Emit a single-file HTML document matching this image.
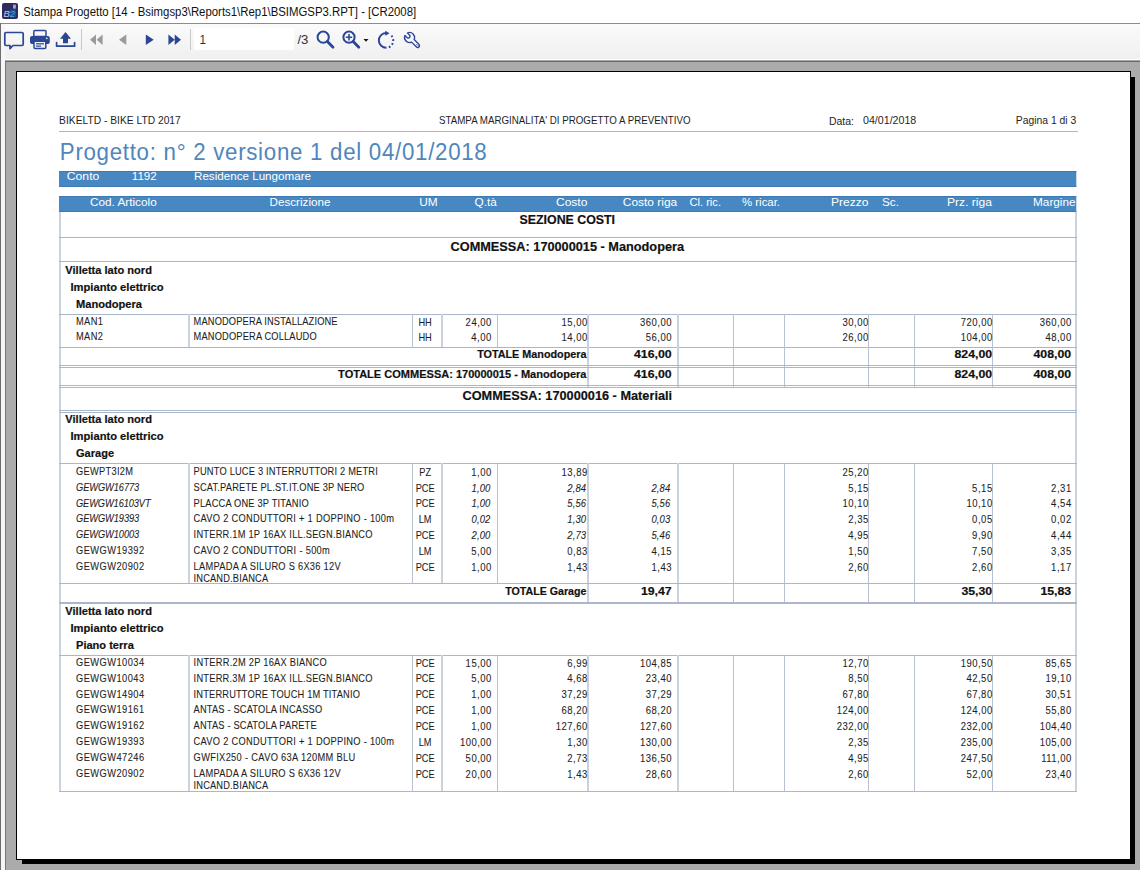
<!DOCTYPE html><html><head><meta charset="utf-8"><style>html,body{margin:0;padding:0;width:1140px;height:870px;overflow:hidden;background:#fff}</style></head><body><svg width="1140" height="870" viewBox="0 0 1140 870" style="position:absolute;left:0;top:0;font-family:'Liberation Sans',sans-serif">
<rect x="0" y="0" width="1140" height="23" fill="#ffffff"/>
<rect x="2" y="3" width="16" height="16" rx="2" fill="#2c2c5e"/>
<rect x="10" y="9.6" width="6" height="7.6" fill="#1f4f8e"/>
<text x="3.4" y="16.8" font-size="9.6" font-style="italic" fill="#c6c8e6">B</text>
<text x="9.9" y="16.6" font-size="9" font-style="italic" fill="#45aee8">2</text>
<rect x="13" y="4.4" width="2.9" height="4.4" rx="0.8" fill="#a2a4c6"/>
<text x="23.20" y="16.00" font-size="12" fill="#111" textLength="393.00" lengthAdjust="spacingAndGlyphs">Stampa Progetto [14 - Bsimgsp3\Reports1\Rep1\BSIMGSP3.RPT] - [CR2008]</text>
<defs><linearGradient id="tb" x1="0" y1="0" x2="0" y2="1"><stop offset="0" stop-color="#fbfbfb"/><stop offset="1" stop-color="#efefef"/></linearGradient></defs>
<rect x="0" y="23" width="1140" height="1" fill="#8c8c8c"/>
<rect x="0" y="24" width="1140" height="36" fill="url(#tb)"/>
<rect x="5" y="59" width="1135" height="1" fill="#ffffff"/>
<rect x="5" y="60" width="1135" height="1" fill="#a8a8a8"/>
<rect x="5" y="61" width="1135" height="1" fill="#6a6a6a"/>
<rect x="0" y="23" width="1" height="847" fill="#6d6d6d"/>
<rect x="1" y="24" width="4" height="846" fill="#f6f6f6"/>
<rect x="5" y="62" width="1135" height="808" fill="#ababab"/>
<rect x="5" y="62" width="1" height="808" fill="#787878"/>
<rect x="22" y="77" width="1113" height="787" fill="#000000"/>
<rect x="16" y="71" width="1115" height="789" fill="#000000"/>
<rect x="17" y="72" width="1113" height="787" fill="#ffffff"/>
<path d="M6 32.5 H22 Q23.2 32.5 23.2 33.7 V44.3 Q23.2 45.5 22 45.5 H13 L10 48.6 V45.5 H6 Q4.8 45.5 4.8 44.3 V33.7 Q4.8 32.5 6 32.5 Z" fill="none" stroke="#2b4694" stroke-width="1.7" stroke-linejoin="round"/>
<rect x="33.8" y="30.6" width="12.2" height="6" rx="1" fill="none" stroke="#2b4694" stroke-width="1.5"/>
<rect x="30" y="36" width="19.8" height="8" rx="2" fill="#2b4694"/>
<circle cx="46.8" cy="38.4" r="0.8" fill="#ffffff"/>
<rect x="34" y="41.2" width="11.8" height="7.4" rx="1" fill="#eef0f6" stroke="#2b4694" stroke-width="1.5"/>
<rect x="36" y="43.2" width="8" height="1.2" fill="#2b4694"/>
<rect x="36" y="45.5" width="5" height="1.2" fill="#2b4694"/>
<path d="M65.5 32 L71 38.8 H68 V43.2 H63 V38.8 H60 Z" fill="#2b4694"/>
<path d="M56.6 42.5 V46.2 H74.6 V42.5" fill="none" stroke="#2b4694" stroke-width="1.7" stroke-linecap="round" stroke-linejoin="round"/>
<rect x="81" y="29" width="1" height="21" fill="#c9c9c9"/>
<rect x="190" y="29" width="1" height="21" fill="#c9c9c9"/>
<path d="M96 34.5 L90 39.8 L96 45 Z M102.6 34.5 L96.6 39.8 L102.6 45 Z" fill="#9a9a9a"/>
<path d="M126.3 34.5 L119 39.8 L126.3 45 Z" fill="#9a9a9a"/>
<path d="M145.8 34.5 L153.7 39.8 L145.8 45 Z" fill="#2b4694"/>
<path d="M168.4 34.5 L174.7 39.8 L168.4 45 Z M174.7 34.5 L181 39.8 L174.7 45 Z" fill="#2b4694"/>
<rect x="194" y="28" width="100" height="22" fill="#ffffff"/>
<text x="199.40" y="43.50" font-size="12" fill="#3a2a3a" textLength="6.50" lengthAdjust="spacingAndGlyphs">1</text>
<text x="297.40" y="44.40" font-size="12" fill="#333" textLength="11.00" lengthAdjust="spacingAndGlyphs">/3</text>
<circle cx="323.2" cy="37.2" r="5.6" fill="none" stroke="#2b4694" stroke-width="2"/>
<path d="M327.4 41.6 L333 47.2" stroke="#2b4694" stroke-width="2.8" stroke-linecap="round"/>
<circle cx="349" cy="37.2" r="5.6" fill="none" stroke="#2b4694" stroke-width="2"/>
<path d="M349 34 V40.4 M345.8 37.2 H352.2" stroke="#2b4694" stroke-width="1.6"/>
<path d="M353.2 41.6 L358.8 47.2" stroke="#2b4694" stroke-width="2.8" stroke-linecap="round"/>
<path d="M363.5 39 H368.5 L366 41.8 Z" fill="#111"/>
<path d="M386 33 A7.4 7.4 0 0 0 386.5 47.8" fill="none" stroke="#2b4694" stroke-width="1.9"/>
<path d="M391.4 35.6 A7.4 7.4 0 0 1 388.6 47.4" fill="none" stroke="#2b4694" stroke-width="2" stroke-dasharray="1.8 2.2"/>
<path d="M385.2 30.8 L389.6 33.2 L385.4 35.8 Z" fill="#2b4694"/>
<path transform="translate(409.6,37.6) rotate(-45)" d="M-1.7 -4.8 A5 5 0 0 0 -1.8 4.6 L-1.8 11.6 Q-1.8 13.2 0 13.2 Q1.8 13.2 1.8 11.6 L1.8 4.6 A5 5 0 0 0 1.7 -4.8 L1.7 -1.6 Q1.7 -0.2 0 -0.2 Q-1.7 -0.2 -1.7 -1.6 Z" fill="none" stroke="#2b4694" stroke-width="1.35" stroke-linejoin="round"/>
<path transform="translate(409.6,37.6) rotate(-45)" d="M-0.9 10 H0.9 M-0.9 11.6 H0.9" stroke="#2b4694" stroke-width="0.7"/>
<text x="59.10" y="124.30" font-size="10.3" fill="#1e1e1e" textLength="121.70" lengthAdjust="spacingAndGlyphs">BIKELTD - BIKE LTD 2017</text>
<text x="439.00" y="124.30" font-size="10.3" fill="#1e1e1e" textLength="251.50" lengthAdjust="spacingAndGlyphs">STAMPA MARGINALITA&#x27; DI PROGETTO A PREVENTIVO</text>
<text x="829.00" y="125.00" font-size="10.3" fill="#1e1e1e" textLength="25.00" lengthAdjust="spacingAndGlyphs">Data:</text>
<text x="863.00" y="124.30" font-size="10.3" fill="#1e1e1e" textLength="53.30" lengthAdjust="spacingAndGlyphs">04/01/2018</text>
<text x="1076.30" y="124.30" font-size="10.3" text-anchor="end" fill="#1e1e1e" textLength="60.50" lengthAdjust="spacingAndGlyphs">Pagina 1 di 3</text>
<rect x="59" y="131" width="1019" height="1" fill="#a7b9d2"/>
<text transform="scale(0.93,1)" x="64.30" y="159.80" font-size="24" fill="#4f86bd" textLength="459.14" lengthAdjust="spacing">Progetto: n° 2 versione 1 del 04/01/2018</text>
<rect x="59" y="171" width="1017.3" height="16" fill="#4788c2"/>
<rect x="59" y="171" width="1017.3" height="1" fill="#3e7ab3"/>
<rect x="59" y="186" width="1017.3" height="1" fill="#3e7ab3"/>
<text x="66.80" y="180.40" font-size="11.6" fill="#ffffff" textLength="32.50" lengthAdjust="spacingAndGlyphs">Conto</text>
<text x="131.80" y="180.40" font-size="11.6" fill="#ffffff" textLength="24.95" lengthAdjust="spacingAndGlyphs">1192</text>
<text x="194.00" y="180.40" font-size="11.6" fill="#ffffff" textLength="117.00" lengthAdjust="spacingAndGlyphs">Residence Lungomare</text>
<rect x="59" y="196" width="1017.3" height="16" fill="#4788c2"/>
<rect x="59" y="196" width="1017.3" height="1" fill="#3e7ab3"/>
<rect x="59" y="211" width="1017.3" height="1" fill="#3e7ab3"/>
<text x="90.00" y="206.40" font-size="11.6" fill="#ffffff" textLength="66.70" lengthAdjust="spacingAndGlyphs">Cod. Articolo</text>
<text x="269.50" y="206.40" font-size="11.6" fill="#ffffff" textLength="61.00" lengthAdjust="spacingAndGlyphs">Descrizione</text>
<text x="419.30" y="206.40" font-size="11.6" fill="#ffffff" textLength="18.40" lengthAdjust="spacingAndGlyphs">UM</text>
<text x="474.60" y="206.40" font-size="11.6" fill="#ffffff" textLength="22.20" lengthAdjust="spacingAndGlyphs">Q.tà</text>
<text x="556.00" y="206.40" font-size="11.6" fill="#ffffff" textLength="31.40" lengthAdjust="spacingAndGlyphs">Costo</text>
<text x="622.80" y="206.40" font-size="11.6" fill="#ffffff" textLength="54.40" lengthAdjust="spacingAndGlyphs">Costo riga</text>
<text x="689.50" y="206.40" font-size="11.6" fill="#ffffff" textLength="31.50" lengthAdjust="spacingAndGlyphs">Cl. ric.</text>
<text x="742.00" y="206.40" font-size="11.6" fill="#ffffff" textLength="38.00" lengthAdjust="spacingAndGlyphs">% ricar.</text>
<text x="831.00" y="206.40" font-size="11.6" fill="#ffffff" textLength="37.50" lengthAdjust="spacingAndGlyphs">Prezzo</text>
<text x="882.00" y="206.40" font-size="11.6" fill="#ffffff" textLength="17.00" lengthAdjust="spacingAndGlyphs">Sc.</text>
<text x="947.00" y="206.40" font-size="11.6" fill="#ffffff" textLength="45.00" lengthAdjust="spacingAndGlyphs">Prz. riga</text>
<text x="1033.00" y="206.40" font-size="11.6" fill="#ffffff" textLength="42.60" lengthAdjust="spacingAndGlyphs">Margine</text>
<rect x="59" y="212" width="2" height="580" fill="#c9d2de"/>
<rect x="1075" y="212" width="2" height="580" fill="#c9d2de"/>
<text x="567.30" y="224.20" font-size="12" font-weight="bold" text-anchor="middle" fill="#111111" textLength="95.55" lengthAdjust="spacingAndGlyphs" stroke="#111111" stroke-width="0.18">SEZIONE COSTI</text>
<rect x="59" y="237" width="1018" height="1" fill="#aab7ca"/>
<text x="567.30" y="251.00" font-size="12.6" font-weight="bold" text-anchor="middle" fill="#111111" textLength="233.52" lengthAdjust="spacingAndGlyphs" stroke="#111111" stroke-width="0.18">COMMESSA: 170000015 - Manodopera</text>
<rect x="59" y="261" width="1018" height="1" fill="#aab7ca"/>
<text x="65.30" y="273.70" font-size="10.2" font-weight="bold" fill="#111111" textLength="86.63" lengthAdjust="spacingAndGlyphs" stroke="#111111" stroke-width="0.18">Villetta lato nord</text>
<text x="70.50" y="290.70" font-size="10.2" font-weight="bold" fill="#111111" textLength="93.07" lengthAdjust="spacingAndGlyphs" stroke="#111111" stroke-width="0.18">Impianto elettrico</text>
<text x="76.00" y="307.70" font-size="10.2" font-weight="bold" fill="#111111" textLength="66.04" lengthAdjust="spacingAndGlyphs" stroke="#111111" stroke-width="0.18">Manodopera</text>
<rect x="59" y="314" width="1018" height="1" fill="#aab7ca"/>
<rect x="188" y="314" width="2" height="33" fill="#c9d2de"/>
<rect x="412" y="314" width="1" height="33" fill="#b6c1d1"/>
<rect x="441" y="314" width="2" height="33" fill="#c9d2de"/>
<rect x="497" y="314" width="1" height="33" fill="#b6c1d1"/>
<rect x="587" y="314" width="2" height="33" fill="#c9d2de"/>
<rect x="677" y="314" width="2" height="33" fill="#c9d2de"/>
<rect x="733" y="314" width="1" height="33" fill="#b6c1d1"/>
<rect x="784" y="314" width="1" height="33" fill="#b6c1d1"/>
<rect x="868" y="314" width="1" height="33" fill="#b6c1d1"/>
<rect x="914" y="314" width="1" height="33" fill="#b6c1d1"/>
<rect x="992" y="314" width="1" height="33" fill="#b6c1d1"/>
<text transform="scale(0.92,1)" x="82.61" y="324.80" font-size="10.1" fill="#1e1e1e" textLength="29.23" lengthAdjust="spacing" stroke="#1e1e1e" stroke-width="0.08">MAN1</text>
<text transform="scale(0.92,1)" x="210.43" y="324.80" font-size="10.1" fill="#1e1e1e" textLength="156.48" lengthAdjust="spacing" stroke="#1e1e1e" stroke-width="0.08">MANODOPERA INSTALLAZIONE</text>
<text transform="scale(0.88,1)" x="483.18" y="325.60" font-size="10.5" text-anchor="middle" fill="#1e1e1e" textLength="14.99" lengthAdjust="spacing" stroke="#1e1e1e" stroke-width="0.08">HH</text>
<text transform="scale(0.88,1)" x="558.41" y="325.60" font-size="10.8" text-anchor="end" fill="#1e1e1e" textLength="29.32" lengthAdjust="spacing" stroke="#1e1e1e" stroke-width="0.08">24,00</text>
<text transform="scale(0.88,1)" x="667.39" y="325.60" font-size="10.8" text-anchor="end" fill="#1e1e1e" textLength="29.32" lengthAdjust="spacing" stroke="#1e1e1e" stroke-width="0.08">15,00</text>
<text transform="scale(0.88,1)" x="763.07" y="325.60" font-size="10.8" text-anchor="end" fill="#1e1e1e" textLength="35.80" lengthAdjust="spacing" stroke="#1e1e1e" stroke-width="0.08">360,00</text>
<text transform="scale(0.88,1)" x="986.70" y="325.60" font-size="10.8" text-anchor="end" fill="#1e1e1e" textLength="29.32" lengthAdjust="spacing" stroke="#1e1e1e" stroke-width="0.08">30,00</text>
<text transform="scale(0.88,1)" x="1127.50" y="325.60" font-size="10.8" text-anchor="end" fill="#1e1e1e" textLength="35.80" lengthAdjust="spacing" stroke="#1e1e1e" stroke-width="0.08">720,00</text>
<text transform="scale(0.88,1)" x="1217.27" y="325.60" font-size="10.8" text-anchor="end" fill="#1e1e1e" textLength="35.80" lengthAdjust="spacing" stroke="#1e1e1e" stroke-width="0.08">360,00</text>
<text transform="scale(0.92,1)" x="82.61" y="340.50" font-size="10.1" fill="#1e1e1e" textLength="29.23" lengthAdjust="spacing" stroke="#1e1e1e" stroke-width="0.08">MAN2</text>
<text transform="scale(0.92,1)" x="210.43" y="340.50" font-size="10.1" fill="#1e1e1e" textLength="133.75" lengthAdjust="spacing" stroke="#1e1e1e" stroke-width="0.08">MANODOPERA COLLAUDO</text>
<text transform="scale(0.88,1)" x="483.18" y="341.30" font-size="10.5" text-anchor="middle" fill="#1e1e1e" textLength="14.99" lengthAdjust="spacing" stroke="#1e1e1e" stroke-width="0.08">HH</text>
<text transform="scale(0.88,1)" x="558.41" y="341.30" font-size="10.8" text-anchor="end" fill="#1e1e1e" textLength="22.85" lengthAdjust="spacing" stroke="#1e1e1e" stroke-width="0.08">4,00</text>
<text transform="scale(0.88,1)" x="667.39" y="341.30" font-size="10.8" text-anchor="end" fill="#1e1e1e" textLength="29.32" lengthAdjust="spacing" stroke="#1e1e1e" stroke-width="0.08">14,00</text>
<text transform="scale(0.88,1)" x="763.07" y="341.30" font-size="10.8" text-anchor="end" fill="#1e1e1e" textLength="29.32" lengthAdjust="spacing" stroke="#1e1e1e" stroke-width="0.08">56,00</text>
<text transform="scale(0.88,1)" x="986.70" y="341.30" font-size="10.8" text-anchor="end" fill="#1e1e1e" textLength="29.32" lengthAdjust="spacing" stroke="#1e1e1e" stroke-width="0.08">26,00</text>
<text transform="scale(0.88,1)" x="1127.50" y="341.30" font-size="10.8" text-anchor="end" fill="#1e1e1e" textLength="35.80" lengthAdjust="spacing" stroke="#1e1e1e" stroke-width="0.08">104,00</text>
<text transform="scale(0.88,1)" x="1217.27" y="341.30" font-size="10.8" text-anchor="end" fill="#1e1e1e" textLength="29.32" lengthAdjust="spacing" stroke="#1e1e1e" stroke-width="0.08">48,00</text>
<rect x="59" y="347" width="1018" height="1" fill="#aab7ca"/>
<rect x="587" y="347" width="2" height="40" fill="#c9d2de"/>
<rect x="677" y="347" width="2" height="40" fill="#c9d2de"/>
<rect x="733" y="347" width="1" height="40" fill="#b6c1d1"/>
<rect x="784" y="347" width="1" height="40" fill="#b6c1d1"/>
<rect x="868" y="347" width="1" height="40" fill="#b6c1d1"/>
<rect x="914" y="347" width="1" height="40" fill="#b6c1d1"/>
<rect x="992" y="347" width="1" height="40" fill="#b6c1d1"/>
<text x="586.50" y="358.20" font-size="10.2" font-weight="bold" text-anchor="end" fill="#111111" textLength="109.33" lengthAdjust="spacingAndGlyphs" stroke="#111111" stroke-width="0.18">TOTALE Manodopera</text>
<text x="671.70" y="358.20" font-size="10.2" font-weight="bold" text-anchor="end" fill="#111111" textLength="37.69" lengthAdjust="spacingAndGlyphs" stroke="#111111" stroke-width="0.18">416,00</text>
<text x="992.20" y="358.20" font-size="10.2" font-weight="bold" text-anchor="end" fill="#111111" textLength="37.69" lengthAdjust="spacingAndGlyphs" stroke="#111111" stroke-width="0.18">824,00</text>
<text x="1071.20" y="358.20" font-size="10.2" font-weight="bold" text-anchor="end" fill="#111111" textLength="37.69" lengthAdjust="spacingAndGlyphs" stroke="#111111" stroke-width="0.18">408,00</text>
<rect x="59" y="365" width="1018" height="1" fill="#aab7ca"/>
<rect x="59" y="367" width="1018" height="1" fill="#aab7ca"/>
<text x="586.50" y="377.90" font-size="10.2" font-weight="bold" text-anchor="end" fill="#111111" textLength="248.38" lengthAdjust="spacingAndGlyphs" stroke="#111111" stroke-width="0.18">TOTALE COMMESSA: 170000015 - Manodopera</text>
<text x="671.70" y="377.90" font-size="10.2" font-weight="bold" text-anchor="end" fill="#111111" textLength="37.69" lengthAdjust="spacingAndGlyphs" stroke="#111111" stroke-width="0.18">416,00</text>
<text x="992.20" y="377.90" font-size="10.2" font-weight="bold" text-anchor="end" fill="#111111" textLength="37.69" lengthAdjust="spacingAndGlyphs" stroke="#111111" stroke-width="0.18">824,00</text>
<text x="1071.20" y="377.90" font-size="10.2" font-weight="bold" text-anchor="end" fill="#111111" textLength="37.69" lengthAdjust="spacingAndGlyphs" stroke="#111111" stroke-width="0.18">408,00</text>
<rect x="59" y="385" width="1018" height="1" fill="#aab7ca"/>
<rect x="59" y="387" width="1018" height="1" fill="#aab7ca"/>
<text x="567.30" y="399.50" font-size="12.6" font-weight="bold" text-anchor="middle" fill="#111111" textLength="209.64" lengthAdjust="spacingAndGlyphs" stroke="#111111" stroke-width="0.18">COMMESSA: 170000016 - Materiali</text>
<rect x="59" y="410" width="1018" height="1" fill="#aab7ca"/>
<rect x="59" y="412" width="1018" height="1" fill="#aab7ca"/>
<text x="65.30" y="422.90" font-size="10.2" font-weight="bold" fill="#111111" textLength="86.63" lengthAdjust="spacingAndGlyphs" stroke="#111111" stroke-width="0.18">Villetta lato nord</text>
<text x="70.50" y="439.90" font-size="10.2" font-weight="bold" fill="#111111" textLength="93.07" lengthAdjust="spacingAndGlyphs" stroke="#111111" stroke-width="0.18">Impianto elettrico</text>
<text x="76.00" y="456.90" font-size="10.2" font-weight="bold" fill="#111111" textLength="38.03" lengthAdjust="spacingAndGlyphs" stroke="#111111" stroke-width="0.18">Garage</text>
<rect x="59" y="463" width="1018" height="1" fill="#aab7ca"/>
<rect x="188" y="463" width="2" height="120" fill="#c9d2de"/>
<rect x="412" y="463" width="1" height="120" fill="#b6c1d1"/>
<rect x="441" y="463" width="2" height="120" fill="#c9d2de"/>
<rect x="497" y="463" width="1" height="120" fill="#b6c1d1"/>
<rect x="587" y="463" width="2" height="120" fill="#c9d2de"/>
<rect x="677" y="463" width="2" height="120" fill="#c9d2de"/>
<rect x="733" y="463" width="1" height="120" fill="#b6c1d1"/>
<rect x="784" y="463" width="1" height="120" fill="#b6c1d1"/>
<rect x="868" y="463" width="1" height="120" fill="#b6c1d1"/>
<rect x="914" y="463" width="1" height="120" fill="#b6c1d1"/>
<rect x="992" y="463" width="1" height="120" fill="#b6c1d1"/>
<rect x="587" y="583" width="2" height="19" fill="#c9d2de"/>
<rect x="677" y="583" width="2" height="19" fill="#c9d2de"/>
<rect x="733" y="583" width="1" height="19" fill="#b6c1d1"/>
<rect x="784" y="583" width="1" height="19" fill="#b6c1d1"/>
<rect x="868" y="583" width="1" height="19" fill="#b6c1d1"/>
<rect x="914" y="583" width="1" height="19" fill="#b6c1d1"/>
<rect x="992" y="583" width="1" height="19" fill="#b6c1d1"/>
<text transform="scale(0.92,1)" x="82.61" y="474.90" font-size="10.1" fill="#1e1e1e" textLength="61.89" lengthAdjust="spacing" stroke="#1e1e1e" stroke-width="0.08">GEWPT3I2M</text>
<text transform="scale(0.92,1)" x="210.43" y="474.90" font-size="10.1" fill="#1e1e1e" textLength="200.24" lengthAdjust="spacing" stroke="#1e1e1e" stroke-width="0.08">PUNTO LUCE 3 INTERRUTTORI 2 METRI</text>
<text transform="scale(0.88,1)" x="483.18" y="475.70" font-size="10.5" text-anchor="middle" fill="#1e1e1e" textLength="13.27" lengthAdjust="spacing" stroke="#1e1e1e" stroke-width="0.08">PZ</text>
<text transform="scale(0.88,1)" x="558.41" y="475.70" font-size="10.8" text-anchor="end" fill="#1e1e1e" textLength="22.85" lengthAdjust="spacing" stroke="#1e1e1e" stroke-width="0.08">1,00</text>
<text transform="scale(0.88,1)" x="667.39" y="475.70" font-size="10.8" text-anchor="end" fill="#1e1e1e" textLength="29.32" lengthAdjust="spacing" stroke="#1e1e1e" stroke-width="0.08">13,89</text>
<text transform="scale(0.88,1)" x="986.70" y="475.70" font-size="10.8" text-anchor="end" fill="#1e1e1e" textLength="29.32" lengthAdjust="spacing" stroke="#1e1e1e" stroke-width="0.08">25,20</text>
<text transform="scale(0.92,1)" x="82.61" y="490.77" font-size="10.1" font-style="italic" fill="#1e1e1e" textLength="68.78" lengthAdjust="spacing" stroke="#1e1e1e" stroke-width="0.08">GEWGW16773</text>
<text transform="scale(0.92,1)" x="210.43" y="490.77" font-size="10.1" fill="#1e1e1e" textLength="185.61" lengthAdjust="spacing" stroke="#1e1e1e" stroke-width="0.08">SCAT.PARETE PL.ST.IT.ONE 3P NERO</text>
<text transform="scale(0.88,1)" x="483.18" y="491.57" font-size="10.5" text-anchor="middle" fill="#1e1e1e" textLength="21.35" lengthAdjust="spacing" stroke="#1e1e1e" stroke-width="0.08">PCE</text>
<text transform="scale(0.88,1)" x="557.27" y="491.57" font-size="10.8" font-style="italic" text-anchor="end" fill="#1e1e1e" textLength="21.41" lengthAdjust="spacing" stroke="#1e1e1e" stroke-width="0.08">1,00</text>
<text transform="scale(0.88,1)" x="666.02" y="491.57" font-size="10.8" font-style="italic" text-anchor="end" fill="#1e1e1e" textLength="21.41" lengthAdjust="spacing" stroke="#1e1e1e" stroke-width="0.08">2,84</text>
<text transform="scale(0.88,1)" x="761.70" y="491.57" font-size="10.8" font-style="italic" text-anchor="end" fill="#1e1e1e" textLength="21.41" lengthAdjust="spacing" stroke="#1e1e1e" stroke-width="0.08">2,84</text>
<text transform="scale(0.88,1)" x="986.70" y="491.57" font-size="10.8" text-anchor="end" fill="#1e1e1e" textLength="22.85" lengthAdjust="spacing" stroke="#1e1e1e" stroke-width="0.08">5,15</text>
<text transform="scale(0.88,1)" x="1127.50" y="491.57" font-size="10.8" text-anchor="end" fill="#1e1e1e" textLength="22.85" lengthAdjust="spacing" stroke="#1e1e1e" stroke-width="0.08">5,15</text>
<text transform="scale(0.88,1)" x="1217.27" y="491.57" font-size="10.8" text-anchor="end" fill="#1e1e1e" textLength="22.85" lengthAdjust="spacing" stroke="#1e1e1e" stroke-width="0.08">2,31</text>
<text transform="scale(0.92,1)" x="82.61" y="506.64" font-size="10.1" font-style="italic" fill="#1e1e1e" textLength="81.04" lengthAdjust="spacing" stroke="#1e1e1e" stroke-width="0.08">GEWGW16103VT</text>
<text transform="scale(0.92,1)" x="210.43" y="506.64" font-size="10.1" fill="#1e1e1e" textLength="125.08" lengthAdjust="spacing" stroke="#1e1e1e" stroke-width="0.08">PLACCA ONE 3P TITANIO</text>
<text transform="scale(0.88,1)" x="483.18" y="507.44" font-size="10.5" text-anchor="middle" fill="#1e1e1e" textLength="21.35" lengthAdjust="spacing" stroke="#1e1e1e" stroke-width="0.08">PCE</text>
<text transform="scale(0.88,1)" x="557.27" y="507.44" font-size="10.8" font-style="italic" text-anchor="end" fill="#1e1e1e" textLength="21.41" lengthAdjust="spacing" stroke="#1e1e1e" stroke-width="0.08">1,00</text>
<text transform="scale(0.88,1)" x="666.02" y="507.44" font-size="10.8" font-style="italic" text-anchor="end" fill="#1e1e1e" textLength="21.41" lengthAdjust="spacing" stroke="#1e1e1e" stroke-width="0.08">5,56</text>
<text transform="scale(0.88,1)" x="761.70" y="507.44" font-size="10.8" font-style="italic" text-anchor="end" fill="#1e1e1e" textLength="21.41" lengthAdjust="spacing" stroke="#1e1e1e" stroke-width="0.08">5,56</text>
<text transform="scale(0.88,1)" x="986.70" y="507.44" font-size="10.8" text-anchor="end" fill="#1e1e1e" textLength="29.32" lengthAdjust="spacing" stroke="#1e1e1e" stroke-width="0.08">10,10</text>
<text transform="scale(0.88,1)" x="1127.50" y="507.44" font-size="10.8" text-anchor="end" fill="#1e1e1e" textLength="29.32" lengthAdjust="spacing" stroke="#1e1e1e" stroke-width="0.08">10,10</text>
<text transform="scale(0.88,1)" x="1217.27" y="507.44" font-size="10.8" text-anchor="end" fill="#1e1e1e" textLength="22.85" lengthAdjust="spacing" stroke="#1e1e1e" stroke-width="0.08">4,54</text>
<text transform="scale(0.92,1)" x="82.61" y="522.51" font-size="10.1" font-style="italic" fill="#1e1e1e" textLength="68.78" lengthAdjust="spacing" stroke="#1e1e1e" stroke-width="0.08">GEWGW19393</text>
<text transform="scale(0.92,1)" x="210.43" y="522.51" font-size="10.1" fill="#1e1e1e" textLength="217.83" lengthAdjust="spacing" stroke="#1e1e1e" stroke-width="0.08">CAVO 2 CONDUTTORI + 1 DOPPINO - 100m</text>
<text transform="scale(0.88,1)" x="483.18" y="523.31" font-size="10.5" text-anchor="middle" fill="#1e1e1e" textLength="14.42" lengthAdjust="spacing" stroke="#1e1e1e" stroke-width="0.08">LM</text>
<text transform="scale(0.88,1)" x="557.27" y="523.31" font-size="10.8" font-style="italic" text-anchor="end" fill="#1e1e1e" textLength="21.41" lengthAdjust="spacing" stroke="#1e1e1e" stroke-width="0.08">0,02</text>
<text transform="scale(0.88,1)" x="666.02" y="523.31" font-size="10.8" font-style="italic" text-anchor="end" fill="#1e1e1e" textLength="21.41" lengthAdjust="spacing" stroke="#1e1e1e" stroke-width="0.08">1,30</text>
<text transform="scale(0.88,1)" x="761.70" y="523.31" font-size="10.8" font-style="italic" text-anchor="end" fill="#1e1e1e" textLength="21.41" lengthAdjust="spacing" stroke="#1e1e1e" stroke-width="0.08">0,03</text>
<text transform="scale(0.88,1)" x="986.70" y="523.31" font-size="10.8" text-anchor="end" fill="#1e1e1e" textLength="22.85" lengthAdjust="spacing" stroke="#1e1e1e" stroke-width="0.08">2,35</text>
<text transform="scale(0.88,1)" x="1127.50" y="523.31" font-size="10.8" text-anchor="end" fill="#1e1e1e" textLength="22.85" lengthAdjust="spacing" stroke="#1e1e1e" stroke-width="0.08">0,05</text>
<text transform="scale(0.88,1)" x="1217.27" y="523.31" font-size="10.8" text-anchor="end" fill="#1e1e1e" textLength="22.85" lengthAdjust="spacing" stroke="#1e1e1e" stroke-width="0.08">0,02</text>
<text transform="scale(0.92,1)" x="82.61" y="538.38" font-size="10.1" font-style="italic" fill="#1e1e1e" textLength="68.78" lengthAdjust="spacing" stroke="#1e1e1e" stroke-width="0.08">GEWGW10003</text>
<text transform="scale(0.92,1)" x="210.43" y="538.38" font-size="10.1" fill="#1e1e1e" textLength="194.43" lengthAdjust="spacing" stroke="#1e1e1e" stroke-width="0.08">INTERR.1M 1P 16AX ILL.SEGN.BIANCO</text>
<text transform="scale(0.88,1)" x="483.18" y="539.18" font-size="10.5" text-anchor="middle" fill="#1e1e1e" textLength="21.35" lengthAdjust="spacing" stroke="#1e1e1e" stroke-width="0.08">PCE</text>
<text transform="scale(0.88,1)" x="557.27" y="539.18" font-size="10.8" font-style="italic" text-anchor="end" fill="#1e1e1e" textLength="21.41" lengthAdjust="spacing" stroke="#1e1e1e" stroke-width="0.08">2,00</text>
<text transform="scale(0.88,1)" x="666.02" y="539.18" font-size="10.8" font-style="italic" text-anchor="end" fill="#1e1e1e" textLength="21.41" lengthAdjust="spacing" stroke="#1e1e1e" stroke-width="0.08">2,73</text>
<text transform="scale(0.88,1)" x="761.70" y="539.18" font-size="10.8" font-style="italic" text-anchor="end" fill="#1e1e1e" textLength="21.41" lengthAdjust="spacing" stroke="#1e1e1e" stroke-width="0.08">5,46</text>
<text transform="scale(0.88,1)" x="986.70" y="539.18" font-size="10.8" text-anchor="end" fill="#1e1e1e" textLength="22.85" lengthAdjust="spacing" stroke="#1e1e1e" stroke-width="0.08">4,95</text>
<text transform="scale(0.88,1)" x="1127.50" y="539.18" font-size="10.8" text-anchor="end" fill="#1e1e1e" textLength="22.85" lengthAdjust="spacing" stroke="#1e1e1e" stroke-width="0.08">9,90</text>
<text transform="scale(0.88,1)" x="1217.27" y="539.18" font-size="10.8" text-anchor="end" fill="#1e1e1e" textLength="22.85" lengthAdjust="spacing" stroke="#1e1e1e" stroke-width="0.08">4,44</text>
<text transform="scale(0.92,1)" x="82.61" y="554.25" font-size="10.1" fill="#1e1e1e" textLength="73.96" lengthAdjust="spacing" stroke="#1e1e1e" stroke-width="0.08">GEWGW19392</text>
<text transform="scale(0.92,1)" x="210.43" y="554.25" font-size="10.1" fill="#1e1e1e" textLength="148.08" lengthAdjust="spacing" stroke="#1e1e1e" stroke-width="0.08">CAVO 2 CONDUTTORI - 500m</text>
<text transform="scale(0.88,1)" x="483.18" y="555.05" font-size="10.5" text-anchor="middle" fill="#1e1e1e" textLength="14.42" lengthAdjust="spacing" stroke="#1e1e1e" stroke-width="0.08">LM</text>
<text transform="scale(0.88,1)" x="558.41" y="555.05" font-size="10.8" text-anchor="end" fill="#1e1e1e" textLength="22.85" lengthAdjust="spacing" stroke="#1e1e1e" stroke-width="0.08">5,00</text>
<text transform="scale(0.88,1)" x="667.39" y="555.05" font-size="10.8" text-anchor="end" fill="#1e1e1e" textLength="22.85" lengthAdjust="spacing" stroke="#1e1e1e" stroke-width="0.08">0,83</text>
<text transform="scale(0.88,1)" x="763.07" y="555.05" font-size="10.8" text-anchor="end" fill="#1e1e1e" textLength="22.85" lengthAdjust="spacing" stroke="#1e1e1e" stroke-width="0.08">4,15</text>
<text transform="scale(0.88,1)" x="986.70" y="555.05" font-size="10.8" text-anchor="end" fill="#1e1e1e" textLength="22.85" lengthAdjust="spacing" stroke="#1e1e1e" stroke-width="0.08">1,50</text>
<text transform="scale(0.88,1)" x="1127.50" y="555.05" font-size="10.8" text-anchor="end" fill="#1e1e1e" textLength="22.85" lengthAdjust="spacing" stroke="#1e1e1e" stroke-width="0.08">7,50</text>
<text transform="scale(0.88,1)" x="1217.27" y="555.05" font-size="10.8" text-anchor="end" fill="#1e1e1e" textLength="22.85" lengthAdjust="spacing" stroke="#1e1e1e" stroke-width="0.08">3,35</text>
<text transform="scale(0.92,1)" x="82.61" y="570.12" font-size="10.1" fill="#1e1e1e" textLength="73.96" lengthAdjust="spacing" stroke="#1e1e1e" stroke-width="0.08">GEWGW20902</text>
<text transform="scale(0.92,1)" x="210.43" y="570.12" font-size="10.1" fill="#1e1e1e" textLength="159.78" lengthAdjust="spacing" stroke="#1e1e1e" stroke-width="0.08">LAMPADA A SILURO S 6X36 12V</text>
<text transform="scale(0.92,1)" x="210.43" y="581.92" font-size="10.1" fill="#1e1e1e" textLength="81.03" lengthAdjust="spacing" stroke="#1e1e1e" stroke-width="0.08">INCAND.BIANCA</text>
<text transform="scale(0.88,1)" x="483.18" y="570.92" font-size="10.5" text-anchor="middle" fill="#1e1e1e" textLength="21.35" lengthAdjust="spacing" stroke="#1e1e1e" stroke-width="0.08">PCE</text>
<text transform="scale(0.88,1)" x="558.41" y="570.92" font-size="10.8" text-anchor="end" fill="#1e1e1e" textLength="22.85" lengthAdjust="spacing" stroke="#1e1e1e" stroke-width="0.08">1,00</text>
<text transform="scale(0.88,1)" x="667.39" y="570.92" font-size="10.8" text-anchor="end" fill="#1e1e1e" textLength="22.85" lengthAdjust="spacing" stroke="#1e1e1e" stroke-width="0.08">1,43</text>
<text transform="scale(0.88,1)" x="763.07" y="570.92" font-size="10.8" text-anchor="end" fill="#1e1e1e" textLength="22.85" lengthAdjust="spacing" stroke="#1e1e1e" stroke-width="0.08">1,43</text>
<text transform="scale(0.88,1)" x="986.70" y="570.92" font-size="10.8" text-anchor="end" fill="#1e1e1e" textLength="22.85" lengthAdjust="spacing" stroke="#1e1e1e" stroke-width="0.08">2,60</text>
<text transform="scale(0.88,1)" x="1127.50" y="570.92" font-size="10.8" text-anchor="end" fill="#1e1e1e" textLength="22.85" lengthAdjust="spacing" stroke="#1e1e1e" stroke-width="0.08">2,60</text>
<text transform="scale(0.88,1)" x="1217.27" y="570.92" font-size="10.8" text-anchor="end" fill="#1e1e1e" textLength="22.85" lengthAdjust="spacing" stroke="#1e1e1e" stroke-width="0.08">1,17</text>
<rect x="59" y="583" width="1018" height="1" fill="#aab7ca"/>
<text x="586.50" y="594.80" font-size="10.2" font-weight="bold" text-anchor="end" fill="#111111" textLength="81.33" lengthAdjust="spacingAndGlyphs" stroke="#111111" stroke-width="0.18">TOTALE Garage</text>
<text x="671.70" y="594.80" font-size="10.2" font-weight="bold" text-anchor="end" fill="#111111" textLength="30.72" lengthAdjust="spacingAndGlyphs" stroke="#111111" stroke-width="0.18">19,47</text>
<text x="992.20" y="594.80" font-size="10.2" font-weight="bold" text-anchor="end" fill="#111111" textLength="30.72" lengthAdjust="spacingAndGlyphs" stroke="#111111" stroke-width="0.18">35,30</text>
<text x="1071.20" y="594.80" font-size="10.2" font-weight="bold" text-anchor="end" fill="#111111" textLength="30.72" lengthAdjust="spacingAndGlyphs" stroke="#111111" stroke-width="0.18">15,83</text>
<rect x="59" y="602" width="1018" height="1" fill="#aab7ca"/>
<rect x="59" y="603" width="1018" height="1" fill="#aab7ca"/>
<text x="65.30" y="614.80" font-size="10.2" font-weight="bold" fill="#111111" textLength="86.63" lengthAdjust="spacingAndGlyphs" stroke="#111111" stroke-width="0.18">Villetta lato nord</text>
<text x="70.50" y="631.80" font-size="10.2" font-weight="bold" fill="#111111" textLength="93.07" lengthAdjust="spacingAndGlyphs" stroke="#111111" stroke-width="0.18">Impianto elettrico</text>
<text x="76.00" y="648.80" font-size="10.2" font-weight="bold" fill="#111111" textLength="57.80" lengthAdjust="spacingAndGlyphs" stroke="#111111" stroke-width="0.18">Piano terra</text>
<rect x="59" y="655" width="1018" height="1" fill="#aab7ca"/>
<rect x="188" y="655" width="2" height="136" fill="#c9d2de"/>
<rect x="412" y="655" width="1" height="136" fill="#b6c1d1"/>
<rect x="441" y="655" width="2" height="136" fill="#c9d2de"/>
<rect x="497" y="655" width="1" height="136" fill="#b6c1d1"/>
<rect x="587" y="655" width="2" height="136" fill="#c9d2de"/>
<rect x="677" y="655" width="2" height="136" fill="#c9d2de"/>
<rect x="733" y="655" width="1" height="136" fill="#b6c1d1"/>
<rect x="784" y="655" width="1" height="136" fill="#b6c1d1"/>
<rect x="868" y="655" width="1" height="136" fill="#b6c1d1"/>
<rect x="914" y="655" width="1" height="136" fill="#b6c1d1"/>
<rect x="992" y="655" width="1" height="136" fill="#b6c1d1"/>
<text transform="scale(0.92,1)" x="82.61" y="665.80" font-size="10.1" fill="#1e1e1e" textLength="73.96" lengthAdjust="spacing" stroke="#1e1e1e" stroke-width="0.08">GEWGW10034</text>
<text transform="scale(0.92,1)" x="210.43" y="665.80" font-size="10.1" fill="#1e1e1e" textLength="144.65" lengthAdjust="spacing" stroke="#1e1e1e" stroke-width="0.08">INTERR.2M 2P 16AX BIANCO</text>
<text transform="scale(0.88,1)" x="483.18" y="666.60" font-size="10.5" text-anchor="middle" fill="#1e1e1e" textLength="21.35" lengthAdjust="spacing" stroke="#1e1e1e" stroke-width="0.08">PCE</text>
<text transform="scale(0.88,1)" x="558.41" y="666.60" font-size="10.8" text-anchor="end" fill="#1e1e1e" textLength="29.32" lengthAdjust="spacing" stroke="#1e1e1e" stroke-width="0.08">15,00</text>
<text transform="scale(0.88,1)" x="667.39" y="666.60" font-size="10.8" text-anchor="end" fill="#1e1e1e" textLength="22.85" lengthAdjust="spacing" stroke="#1e1e1e" stroke-width="0.08">6,99</text>
<text transform="scale(0.88,1)" x="763.07" y="666.60" font-size="10.8" text-anchor="end" fill="#1e1e1e" textLength="35.80" lengthAdjust="spacing" stroke="#1e1e1e" stroke-width="0.08">104,85</text>
<text transform="scale(0.88,1)" x="986.70" y="666.60" font-size="10.8" text-anchor="end" fill="#1e1e1e" textLength="29.32" lengthAdjust="spacing" stroke="#1e1e1e" stroke-width="0.08">12,70</text>
<text transform="scale(0.88,1)" x="1127.50" y="666.60" font-size="10.8" text-anchor="end" fill="#1e1e1e" textLength="35.80" lengthAdjust="spacing" stroke="#1e1e1e" stroke-width="0.08">190,50</text>
<text transform="scale(0.88,1)" x="1217.27" y="666.60" font-size="10.8" text-anchor="end" fill="#1e1e1e" textLength="29.32" lengthAdjust="spacing" stroke="#1e1e1e" stroke-width="0.08">85,65</text>
<text transform="scale(0.92,1)" x="82.61" y="681.67" font-size="10.1" fill="#1e1e1e" textLength="73.96" lengthAdjust="spacing" stroke="#1e1e1e" stroke-width="0.08">GEWGW10043</text>
<text transform="scale(0.92,1)" x="210.43" y="681.67" font-size="10.1" fill="#1e1e1e" textLength="194.43" lengthAdjust="spacing" stroke="#1e1e1e" stroke-width="0.08">INTERR.3M 1P 16AX ILL.SEGN.BIANCO</text>
<text transform="scale(0.88,1)" x="483.18" y="682.47" font-size="10.5" text-anchor="middle" fill="#1e1e1e" textLength="21.35" lengthAdjust="spacing" stroke="#1e1e1e" stroke-width="0.08">PCE</text>
<text transform="scale(0.88,1)" x="558.41" y="682.47" font-size="10.8" text-anchor="end" fill="#1e1e1e" textLength="22.85" lengthAdjust="spacing" stroke="#1e1e1e" stroke-width="0.08">5,00</text>
<text transform="scale(0.88,1)" x="667.39" y="682.47" font-size="10.8" text-anchor="end" fill="#1e1e1e" textLength="22.85" lengthAdjust="spacing" stroke="#1e1e1e" stroke-width="0.08">4,68</text>
<text transform="scale(0.88,1)" x="763.07" y="682.47" font-size="10.8" text-anchor="end" fill="#1e1e1e" textLength="29.32" lengthAdjust="spacing" stroke="#1e1e1e" stroke-width="0.08">23,40</text>
<text transform="scale(0.88,1)" x="986.70" y="682.47" font-size="10.8" text-anchor="end" fill="#1e1e1e" textLength="22.85" lengthAdjust="spacing" stroke="#1e1e1e" stroke-width="0.08">8,50</text>
<text transform="scale(0.88,1)" x="1127.50" y="682.47" font-size="10.8" text-anchor="end" fill="#1e1e1e" textLength="29.32" lengthAdjust="spacing" stroke="#1e1e1e" stroke-width="0.08">42,50</text>
<text transform="scale(0.88,1)" x="1217.27" y="682.47" font-size="10.8" text-anchor="end" fill="#1e1e1e" textLength="29.32" lengthAdjust="spacing" stroke="#1e1e1e" stroke-width="0.08">19,10</text>
<text transform="scale(0.92,1)" x="82.61" y="697.54" font-size="10.1" fill="#1e1e1e" textLength="73.96" lengthAdjust="spacing" stroke="#1e1e1e" stroke-width="0.08">GEWGW14904</text>
<text transform="scale(0.92,1)" x="210.43" y="697.54" font-size="10.1" fill="#1e1e1e" textLength="180.82" lengthAdjust="spacing" stroke="#1e1e1e" stroke-width="0.08">INTERRUTTORE TOUCH 1M TITANIO</text>
<text transform="scale(0.88,1)" x="483.18" y="698.34" font-size="10.5" text-anchor="middle" fill="#1e1e1e" textLength="21.35" lengthAdjust="spacing" stroke="#1e1e1e" stroke-width="0.08">PCE</text>
<text transform="scale(0.88,1)" x="558.41" y="698.34" font-size="10.8" text-anchor="end" fill="#1e1e1e" textLength="22.85" lengthAdjust="spacing" stroke="#1e1e1e" stroke-width="0.08">1,00</text>
<text transform="scale(0.88,1)" x="667.39" y="698.34" font-size="10.8" text-anchor="end" fill="#1e1e1e" textLength="29.32" lengthAdjust="spacing" stroke="#1e1e1e" stroke-width="0.08">37,29</text>
<text transform="scale(0.88,1)" x="763.07" y="698.34" font-size="10.8" text-anchor="end" fill="#1e1e1e" textLength="29.32" lengthAdjust="spacing" stroke="#1e1e1e" stroke-width="0.08">37,29</text>
<text transform="scale(0.88,1)" x="986.70" y="698.34" font-size="10.8" text-anchor="end" fill="#1e1e1e" textLength="29.32" lengthAdjust="spacing" stroke="#1e1e1e" stroke-width="0.08">67,80</text>
<text transform="scale(0.88,1)" x="1127.50" y="698.34" font-size="10.8" text-anchor="end" fill="#1e1e1e" textLength="29.32" lengthAdjust="spacing" stroke="#1e1e1e" stroke-width="0.08">67,80</text>
<text transform="scale(0.88,1)" x="1217.27" y="698.34" font-size="10.8" text-anchor="end" fill="#1e1e1e" textLength="29.32" lengthAdjust="spacing" stroke="#1e1e1e" stroke-width="0.08">30,51</text>
<text transform="scale(0.92,1)" x="82.61" y="713.41" font-size="10.1" fill="#1e1e1e" textLength="73.96" lengthAdjust="spacing" stroke="#1e1e1e" stroke-width="0.08">GEWGW19161</text>
<text transform="scale(0.92,1)" x="210.43" y="713.41" font-size="10.1" fill="#1e1e1e" textLength="139.69" lengthAdjust="spacing" stroke="#1e1e1e" stroke-width="0.08">ANTAS - SCATOLA INCASSO</text>
<text transform="scale(0.88,1)" x="483.18" y="714.21" font-size="10.5" text-anchor="middle" fill="#1e1e1e" textLength="21.35" lengthAdjust="spacing" stroke="#1e1e1e" stroke-width="0.08">PCE</text>
<text transform="scale(0.88,1)" x="558.41" y="714.21" font-size="10.8" text-anchor="end" fill="#1e1e1e" textLength="22.85" lengthAdjust="spacing" stroke="#1e1e1e" stroke-width="0.08">1,00</text>
<text transform="scale(0.88,1)" x="667.39" y="714.21" font-size="10.8" text-anchor="end" fill="#1e1e1e" textLength="29.32" lengthAdjust="spacing" stroke="#1e1e1e" stroke-width="0.08">68,20</text>
<text transform="scale(0.88,1)" x="763.07" y="714.21" font-size="10.8" text-anchor="end" fill="#1e1e1e" textLength="29.32" lengthAdjust="spacing" stroke="#1e1e1e" stroke-width="0.08">68,20</text>
<text transform="scale(0.88,1)" x="986.70" y="714.21" font-size="10.8" text-anchor="end" fill="#1e1e1e" textLength="35.80" lengthAdjust="spacing" stroke="#1e1e1e" stroke-width="0.08">124,00</text>
<text transform="scale(0.88,1)" x="1127.50" y="714.21" font-size="10.8" text-anchor="end" fill="#1e1e1e" textLength="35.80" lengthAdjust="spacing" stroke="#1e1e1e" stroke-width="0.08">124,00</text>
<text transform="scale(0.88,1)" x="1217.27" y="714.21" font-size="10.8" text-anchor="end" fill="#1e1e1e" textLength="29.32" lengthAdjust="spacing" stroke="#1e1e1e" stroke-width="0.08">55,80</text>
<text transform="scale(0.92,1)" x="82.61" y="729.28" font-size="10.1" fill="#1e1e1e" textLength="73.96" lengthAdjust="spacing" stroke="#1e1e1e" stroke-width="0.08">GEWGW19162</text>
<text transform="scale(0.92,1)" x="210.43" y="729.28" font-size="10.1" fill="#1e1e1e" textLength="133.76" lengthAdjust="spacing" stroke="#1e1e1e" stroke-width="0.08">ANTAS - SCATOLA PARETE</text>
<text transform="scale(0.88,1)" x="483.18" y="730.08" font-size="10.5" text-anchor="middle" fill="#1e1e1e" textLength="21.35" lengthAdjust="spacing" stroke="#1e1e1e" stroke-width="0.08">PCE</text>
<text transform="scale(0.88,1)" x="558.41" y="730.08" font-size="10.8" text-anchor="end" fill="#1e1e1e" textLength="22.85" lengthAdjust="spacing" stroke="#1e1e1e" stroke-width="0.08">1,00</text>
<text transform="scale(0.88,1)" x="667.39" y="730.08" font-size="10.8" text-anchor="end" fill="#1e1e1e" textLength="35.80" lengthAdjust="spacing" stroke="#1e1e1e" stroke-width="0.08">127,60</text>
<text transform="scale(0.88,1)" x="763.07" y="730.08" font-size="10.8" text-anchor="end" fill="#1e1e1e" textLength="35.80" lengthAdjust="spacing" stroke="#1e1e1e" stroke-width="0.08">127,60</text>
<text transform="scale(0.88,1)" x="986.70" y="730.08" font-size="10.8" text-anchor="end" fill="#1e1e1e" textLength="35.80" lengthAdjust="spacing" stroke="#1e1e1e" stroke-width="0.08">232,00</text>
<text transform="scale(0.88,1)" x="1127.50" y="730.08" font-size="10.8" text-anchor="end" fill="#1e1e1e" textLength="35.80" lengthAdjust="spacing" stroke="#1e1e1e" stroke-width="0.08">232,00</text>
<text transform="scale(0.88,1)" x="1217.27" y="730.08" font-size="10.8" text-anchor="end" fill="#1e1e1e" textLength="35.80" lengthAdjust="spacing" stroke="#1e1e1e" stroke-width="0.08">104,40</text>
<text transform="scale(0.92,1)" x="82.61" y="745.15" font-size="10.1" fill="#1e1e1e" textLength="73.96" lengthAdjust="spacing" stroke="#1e1e1e" stroke-width="0.08">GEWGW19393</text>
<text transform="scale(0.92,1)" x="210.43" y="745.15" font-size="10.1" fill="#1e1e1e" textLength="217.83" lengthAdjust="spacing" stroke="#1e1e1e" stroke-width="0.08">CAVO 2 CONDUTTORI + 1 DOPPINO - 100m</text>
<text transform="scale(0.88,1)" x="483.18" y="745.95" font-size="10.5" text-anchor="middle" fill="#1e1e1e" textLength="14.42" lengthAdjust="spacing" stroke="#1e1e1e" stroke-width="0.08">LM</text>
<text transform="scale(0.88,1)" x="558.41" y="745.95" font-size="10.8" text-anchor="end" fill="#1e1e1e" textLength="35.80" lengthAdjust="spacing" stroke="#1e1e1e" stroke-width="0.08">100,00</text>
<text transform="scale(0.88,1)" x="667.39" y="745.95" font-size="10.8" text-anchor="end" fill="#1e1e1e" textLength="22.85" lengthAdjust="spacing" stroke="#1e1e1e" stroke-width="0.08">1,30</text>
<text transform="scale(0.88,1)" x="763.07" y="745.95" font-size="10.8" text-anchor="end" fill="#1e1e1e" textLength="35.80" lengthAdjust="spacing" stroke="#1e1e1e" stroke-width="0.08">130,00</text>
<text transform="scale(0.88,1)" x="986.70" y="745.95" font-size="10.8" text-anchor="end" fill="#1e1e1e" textLength="22.85" lengthAdjust="spacing" stroke="#1e1e1e" stroke-width="0.08">2,35</text>
<text transform="scale(0.88,1)" x="1127.50" y="745.95" font-size="10.8" text-anchor="end" fill="#1e1e1e" textLength="35.80" lengthAdjust="spacing" stroke="#1e1e1e" stroke-width="0.08">235,00</text>
<text transform="scale(0.88,1)" x="1217.27" y="745.95" font-size="10.8" text-anchor="end" fill="#1e1e1e" textLength="35.80" lengthAdjust="spacing" stroke="#1e1e1e" stroke-width="0.08">105,00</text>
<text transform="scale(0.92,1)" x="82.61" y="761.02" font-size="10.1" fill="#1e1e1e" textLength="73.96" lengthAdjust="spacing" stroke="#1e1e1e" stroke-width="0.08">GEWGW47246</text>
<text transform="scale(0.92,1)" x="210.43" y="761.02" font-size="10.1" fill="#1e1e1e" textLength="175.56" lengthAdjust="spacing" stroke="#1e1e1e" stroke-width="0.08">GWFIX250 - CAVO 63A 120MM BLU</text>
<text transform="scale(0.88,1)" x="483.18" y="761.82" font-size="10.5" text-anchor="middle" fill="#1e1e1e" textLength="21.35" lengthAdjust="spacing" stroke="#1e1e1e" stroke-width="0.08">PCE</text>
<text transform="scale(0.88,1)" x="558.41" y="761.82" font-size="10.8" text-anchor="end" fill="#1e1e1e" textLength="29.32" lengthAdjust="spacing" stroke="#1e1e1e" stroke-width="0.08">50,00</text>
<text transform="scale(0.88,1)" x="667.39" y="761.82" font-size="10.8" text-anchor="end" fill="#1e1e1e" textLength="22.85" lengthAdjust="spacing" stroke="#1e1e1e" stroke-width="0.08">2,73</text>
<text transform="scale(0.88,1)" x="763.07" y="761.82" font-size="10.8" text-anchor="end" fill="#1e1e1e" textLength="35.80" lengthAdjust="spacing" stroke="#1e1e1e" stroke-width="0.08">136,50</text>
<text transform="scale(0.88,1)" x="986.70" y="761.82" font-size="10.8" text-anchor="end" fill="#1e1e1e" textLength="22.85" lengthAdjust="spacing" stroke="#1e1e1e" stroke-width="0.08">4,95</text>
<text transform="scale(0.88,1)" x="1127.50" y="761.82" font-size="10.8" text-anchor="end" fill="#1e1e1e" textLength="35.80" lengthAdjust="spacing" stroke="#1e1e1e" stroke-width="0.08">247,50</text>
<text transform="scale(0.88,1)" x="1217.27" y="761.82" font-size="10.8" text-anchor="end" fill="#1e1e1e" textLength="34.07" lengthAdjust="spacing" stroke="#1e1e1e" stroke-width="0.08">111,00</text>
<text transform="scale(0.92,1)" x="82.61" y="776.89" font-size="10.1" fill="#1e1e1e" textLength="73.96" lengthAdjust="spacing" stroke="#1e1e1e" stroke-width="0.08">GEWGW20902</text>
<text transform="scale(0.92,1)" x="210.43" y="776.89" font-size="10.1" fill="#1e1e1e" textLength="159.78" lengthAdjust="spacing" stroke="#1e1e1e" stroke-width="0.08">LAMPADA A SILURO S 6X36 12V</text>
<text transform="scale(0.92,1)" x="210.43" y="788.69" font-size="10.1" fill="#1e1e1e" textLength="81.03" lengthAdjust="spacing" stroke="#1e1e1e" stroke-width="0.08">INCAND.BIANCA</text>
<text transform="scale(0.88,1)" x="483.18" y="777.69" font-size="10.5" text-anchor="middle" fill="#1e1e1e" textLength="21.35" lengthAdjust="spacing" stroke="#1e1e1e" stroke-width="0.08">PCE</text>
<text transform="scale(0.88,1)" x="558.41" y="777.69" font-size="10.8" text-anchor="end" fill="#1e1e1e" textLength="29.32" lengthAdjust="spacing" stroke="#1e1e1e" stroke-width="0.08">20,00</text>
<text transform="scale(0.88,1)" x="667.39" y="777.69" font-size="10.8" text-anchor="end" fill="#1e1e1e" textLength="22.85" lengthAdjust="spacing" stroke="#1e1e1e" stroke-width="0.08">1,43</text>
<text transform="scale(0.88,1)" x="763.07" y="777.69" font-size="10.8" text-anchor="end" fill="#1e1e1e" textLength="29.32" lengthAdjust="spacing" stroke="#1e1e1e" stroke-width="0.08">28,60</text>
<text transform="scale(0.88,1)" x="986.70" y="777.69" font-size="10.8" text-anchor="end" fill="#1e1e1e" textLength="22.85" lengthAdjust="spacing" stroke="#1e1e1e" stroke-width="0.08">2,60</text>
<text transform="scale(0.88,1)" x="1127.50" y="777.69" font-size="10.8" text-anchor="end" fill="#1e1e1e" textLength="29.32" lengthAdjust="spacing" stroke="#1e1e1e" stroke-width="0.08">52,00</text>
<text transform="scale(0.88,1)" x="1217.27" y="777.69" font-size="10.8" text-anchor="end" fill="#1e1e1e" textLength="29.32" lengthAdjust="spacing" stroke="#1e1e1e" stroke-width="0.08">23,40</text>
<rect x="59" y="791" width="1018" height="1" fill="#aab7ca"/>
</svg></body></html>
